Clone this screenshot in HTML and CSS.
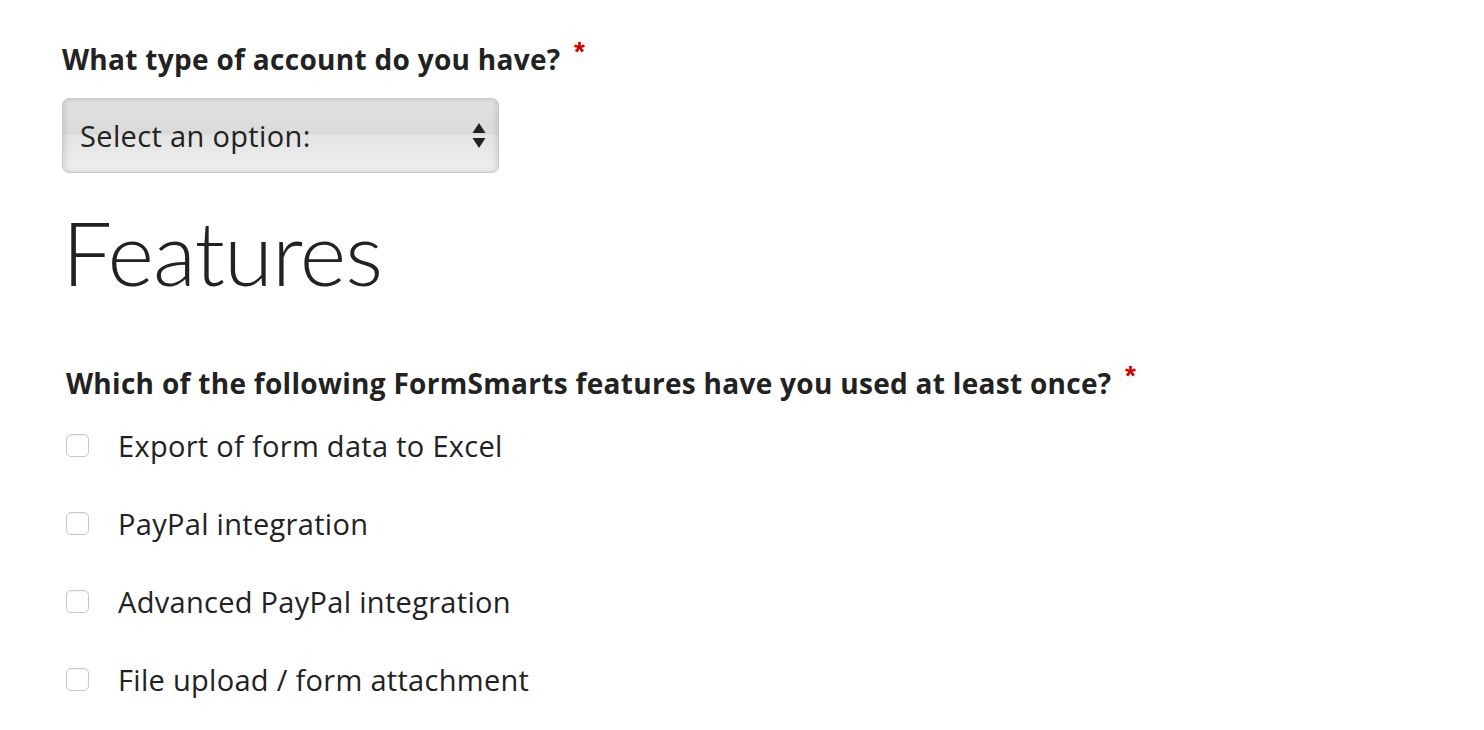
FILE: index.html
```html
<!DOCTYPE html>
<html>
<head>
<meta charset="utf-8">
<link rel="stylesheet" href="styles.css">
</head>
<body>
<div class="form">
  <div class="field">
    <div class="label">What type of account do you have? <span class="req">*</span></div>
    <div class="select">
      <span class="select-text">Select an option:</span>
      <svg class="arrows" width="14" height="26" viewBox="0 0 14 26"><path d="M7 0 L13.5 10 L0.5 10 Z M0.5 15 L13.5 15 L7 25 Z" fill="#222"/></svg>
    </div>
  </div>
  <h1 class="heading">Features</h1>
  <div class="field q2">
    <div class="label">Which of the following FormSmarts features have you used at least once? <span class="req">*</span></div>
    <div class="options">
      <div class="option"><span class="box"></span><span class="opt-text">Export of form data to Excel</span></div>
      <div class="option"><span class="box"></span><span class="opt-text">PayPal integration</span></div>
      <div class="option"><span class="box"></span><span class="opt-text">Advanced PayPal integration</span></div>
      <div class="option"><span class="box"></span><span class="opt-text">File upload / form attachment</span></div>
    </div>
  </div>
</div>
</body>
</html>
```
FILE: styles.css
```css
html, body { margin: 0; padding: 0; background: #fff; }
body { font-family: "Open Sans", "Lato", sans-serif; color: #222; }
.form { padding: 39px 0 0 62px; }
.label { font-size: 28px; font-weight: 700; line-height: 40px; height: 40px; letter-spacing: 0.3px; color: #222; }
.req { color: #c00; font-family: "Liberation Sans", sans-serif; font-weight: 700; font-size: 28px; line-height: 0; letter-spacing: 0; position: relative; top: -9px; margin-left: 6px; }
.select {
  margin-top: 19px;
  width: 437px; height: 75px; box-sizing: border-box;
  border: 1px solid #c9c9c9; border-radius: 7px;
  background: linear-gradient(#e1e1e1 0%, #dadada 48%, #e4e4e4 50%, #eeeeee 100%);
  box-shadow: inset 3px 0 4px rgba(0,0,0,0.08), inset -3px 0 4px rgba(0,0,0,0.08);
  display: flex; align-items: center; justify-content: space-between;
  padding: 0 12px 0 17px;
}
.select-text { font-size: 29px; letter-spacing: 0.35px; color: #222; }
.heading { margin: 24px 0 0 0; font-family: "Lato", sans-serif; font-size: 89px; font-weight: 300; letter-spacing: -1px; line-height: 110px; color: #222; }
.q2 { margin-top: 56px; padding-left: 4px; }
.options { display: flex; flex-direction: column; margin-top: 3px; }
.option { display: flex; align-items: center; height: 78px; }
.box { width: 23px; height: 23px; box-sizing: border-box; border: 1px solid #c8c8c8; border-radius: 5px; background: #fff; box-shadow: inset 0 1px 2px rgba(0,0,0,0.06); }
.opt-text { font-size: 29px; letter-spacing: 0.3px; margin-left: 29px; color: #222; }
```
